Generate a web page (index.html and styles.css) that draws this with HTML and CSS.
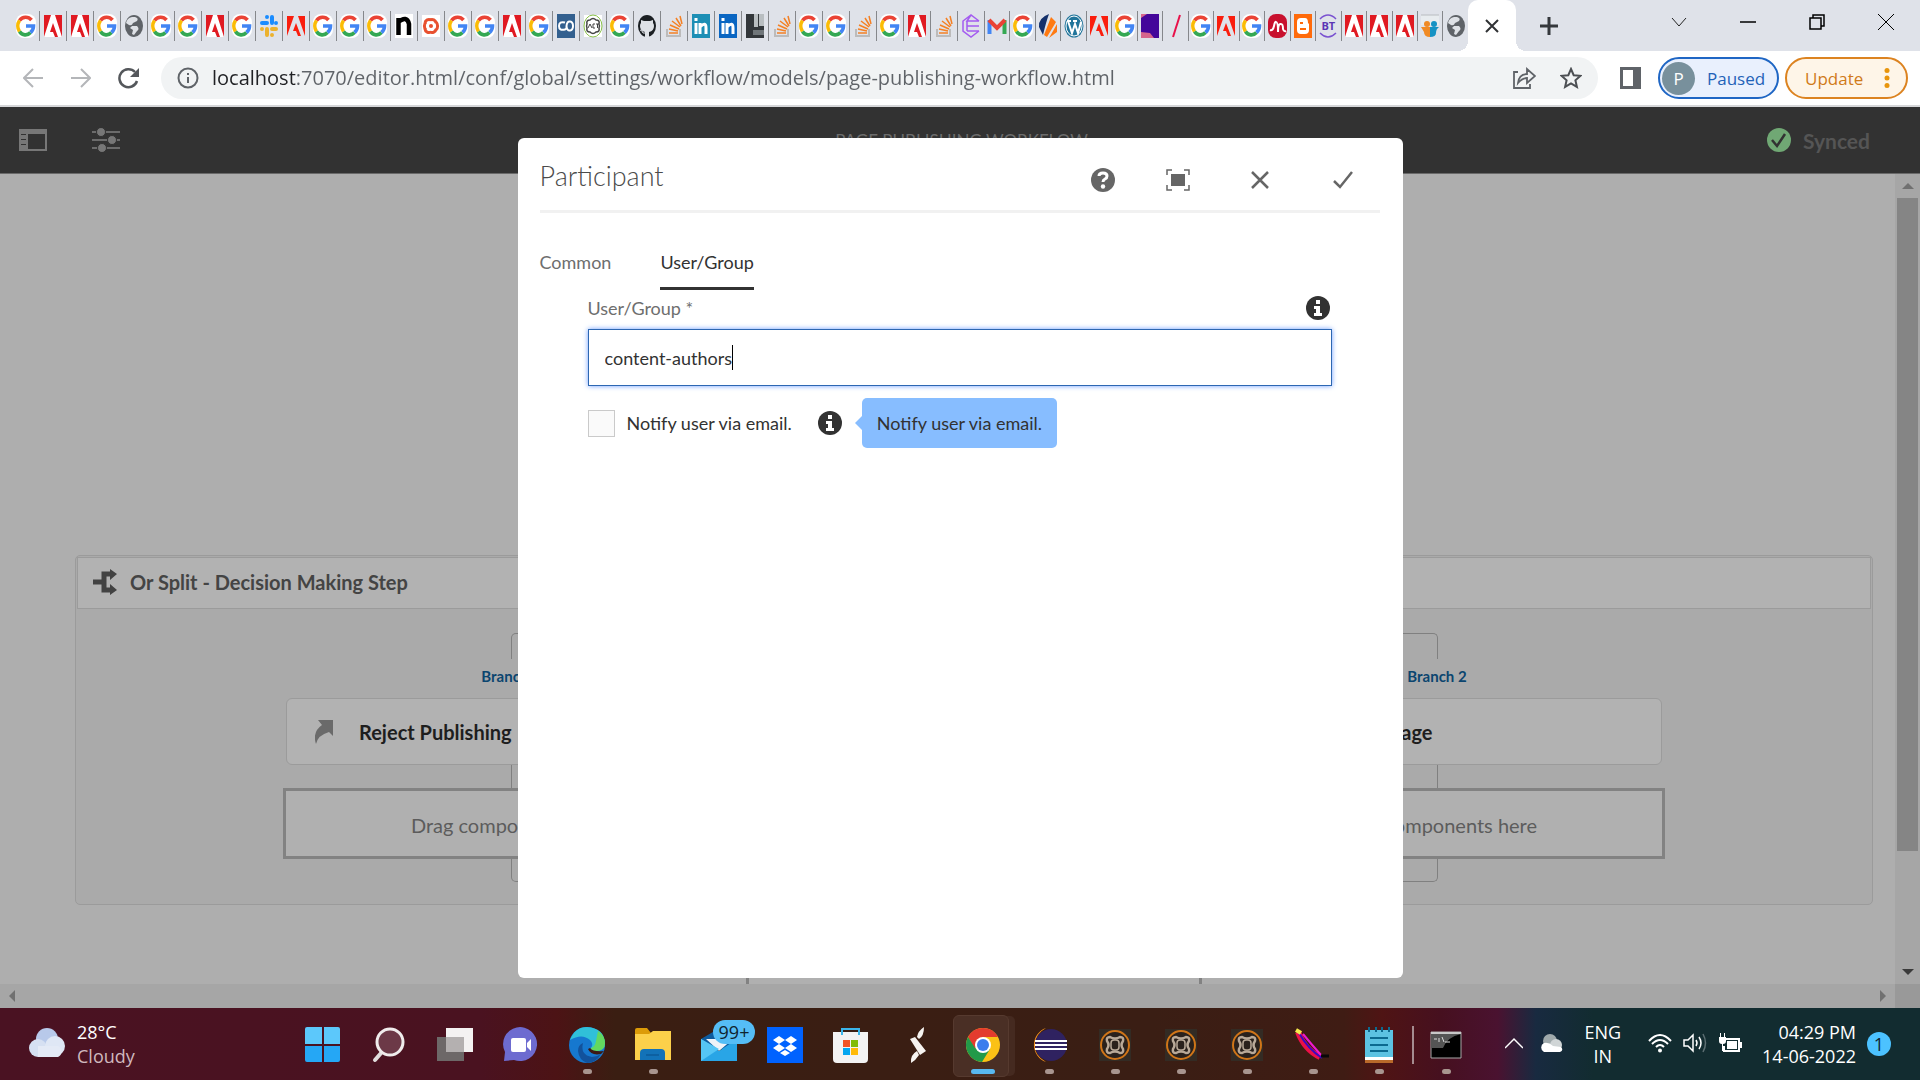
FILE: index.html
```html
<!DOCTYPE html>
<html lang="en">
<head>
	<meta charset="UTF-8">
	<title>Page Publishing Workflow</title>
	<link rel="stylesheet" href="styles.css">
</head>
<body>
	<!-- icon sprites -->
	<svg class="sprites" aria-hidden="true">
		<symbol id="f-g" viewBox="0 0 20 24" preserveAspectRatio="none">
			<rect width="20" height="24" rx="8" fill="#fff"/>
			<path d="M15.500 6A8 9 0 0 0 3.500 6.500" fill="none" stroke="#ea4335" stroke-width="3.600"/>
			<path d="M3.500 6.500A8 9 0 0 0 3.500 17.500" fill="none" stroke="#fbbc05" stroke-width="3.600"/>
			<path d="M3.500 17.500A7.500 9 0 0 0 14.500 18.500" fill="none" stroke="#34a853" stroke-width="3.600"/>
			<path d="M10 12H17.500Q17.500 16 14.500 18.500" fill="none" stroke="#4285f4" stroke-width="3.600"/>
		</symbol>
		<symbol id="f-a" viewBox="0 0 20 24" preserveAspectRatio="none">
			<path fill="#fff" d="M1 1h18v22H1z"/>
			<path fill="#e01a22" d="M1 1h7L1 23zM12 1h7v22zM10 9l5 14h-3l-2-5H7z"/>
		</symbol>
		<symbol id="f-ar" viewBox="0 0 20 24" preserveAspectRatio="none">
			<path fill="#fa1e0e" d="M1 2h7L1 22zM12 2h7v20zM10 9l5 13h-3l-2-5H7z"/>
		</symbol>
		<symbol id="f-globe" viewBox="0 0 20 24" preserveAspectRatio="none">
			<ellipse cx="10" cy="12" rx="9" ry="11" fill="#5f6368"/>
			<path d="M11 3q4 1 2 4l-4 2q-1 3-4 2l-3-2q1-5 6-6M8 12h5q3 3 0 5l-3 4-2-1 1-4-3-2z" fill="#dee1e6"/>
		</symbol>
		<symbol id="f-slack" viewBox="0 0 20 24" preserveAspectRatio="none">
			<g fill="none" stroke-width="4" stroke-linecap="round">
				<path stroke="#1a8cff" d="M8 3v0M3 9h5M13 3v6M17 9v0"/>
				<path stroke="#ecb22e" d="M3 15v0M8 15v6M13 15h4M13 21v0"/>
			</g>
		</symbol>
		<symbol id="f-n" viewBox="0 0 20 24" preserveAspectRatio="none">
			<path fill="#fff" d="M1 0h18v24H1z"/>
			<path d="M4.500 21V4M4 8q9-7 11 2v11" fill="none" stroke="#000" stroke-width="4.500"/>
		</symbol>
		<symbol id="f-swirl" viewBox="0 0 20 24" preserveAspectRatio="none">
			<path fill="#fff" d="M1 1h18v22H1z"/>
			<path d="M9 6a4 4 0 0 1 6 3M15 8a4 5 0 0 1 0 8M15 15a4 4 0 0 1-6 3M10 18a4 4 0 0 1-6-3M5 16a4 5 0 0 1 0-8M4 9a4 4 0 0 1 6-3" fill="none" stroke="#e8502f" stroke-width="3"/>
			<circle cx="10" cy="12" r="2" fill="#e8502f"/>
		</symbol>
		<symbol id="f-co" viewBox="0 0 20 24" preserveAspectRatio="none">
			<path fill="#33608f" d="M1 0h18v24H1z"/>
			<path d="M9 8.500Q3 7 3 12t6 3.500Q11 15 10.500 12 11 7 14 7.500T17 12t-3 4.500-3.500-4.500" fill="none" stroke="#fff" stroke-width="2"/>
		</symbol>
		<symbol id="f-act" viewBox="0 0 20 24" preserveAspectRatio="none">
			<path fill="#fff" d="M1 1h18v22H1z"/>
			<ellipse cx="10" cy="12" rx="9" ry="11" fill="none" stroke="#8ac249"/>
			<path d="M7 6q3-3 6 0 4 0 3 4 1 2 0 4 1 4-3 4-3 3-6 0-4 0-3-4-1-2 0-4-1-4 3-4z" fill="none" stroke="#444" stroke-width="1.500"/>
			<path d="M5 14l2-4 2 4M12 10h-2v4h2M13 10h3M14.500 10v4" fill="none" stroke="#444"/>
		</symbol>
		<symbol id="f-github" viewBox="0 0 20 24" preserveAspectRatio="none">
			<ellipse cx="10" cy="12" rx="9" ry="11" fill="#1b1f23"/>
			<path d="M8 23v-5q-5-1-5-6 0-2 1-3V6l3 1h6l3-1v3q1 1 1 3 0 5-5 6v5z" fill="#dee1e6"/>
			<path d="M3 16q2 0 3 3h3" fill="none" stroke="#dee1e6"/>
		</symbol>
		<symbol id="f-so" viewBox="0 0 20 24" preserveAspectRatio="none">
			<path d="M3 15v7h13v-7" fill="none" stroke="#bcbbbb" stroke-width="2"/>
			<path d="M5 19h9M5 15l9 2M6 11l9 4M8 7l8 6M12 4l5 8M16 2l2 8" stroke="#f48024" stroke-width="1.500"/>
		</symbol>
		<symbol id="f-in" viewBox="0 0 20 24" preserveAspectRatio="none">
			<path fill="currentColor" d="M1 0h18v24H1z"/>
			<path d="M5 9v11M5 4v3M9 9v11M9 13q6-6 6 1v6" fill="none" stroke="#fff" stroke-width="3"/>
		</symbol>
		<symbol id="f-photo" viewBox="0 0 20 24" preserveAspectRatio="none">
			<path fill="#33373b" d="M1 0h18v24H1z"/><path fill="#b9bec1" d="M9 0h4v13H9zM14 0h5v12h-5z"/><path fill="#70767a" d="M8 16h11v5H8z"/>
		</symbol>
		<symbol id="f-hex" viewBox="0 0 20 24" preserveAspectRatio="none">
			<path d="M18 7l-8-6-8 6v10l8 6 8-6M6 7v10M6 12h12M10 1L6 7l12 0M6 17h12" fill="none" stroke="#a45cf0" stroke-width="1.500"/>
		</symbol>
		<symbol id="f-gmail" viewBox="0 0 20 24" preserveAspectRatio="none">
			<path d="M2.500 20V6" stroke="#4285f4" stroke-width="4"/><path d="M17.500 20V6" stroke="#34a853" stroke-width="4"/>
			<path d="M2 6l8 8 8-8" fill="none" stroke="#ea4335" stroke-width="4"/>
		</symbol>
		<symbol id="f-split" viewBox="0 0 20 24" preserveAspectRatio="none">
			<path fill="#14306b" d="M11 0Q0 4 1 13l4 8Q8 8 11 0z"/><path fill="#ff7a12" d="M13 3l5 5-9 15-3-2zM19 10v8l-8 6z"/>
		</symbol>
		<symbol id="f-wp" viewBox="0 0 20 24" preserveAspectRatio="none">
			<ellipse cx="10" cy="12" rx="9.500" ry="11.500" fill="#21759b"/>
			<ellipse cx="10" cy="12" rx="8" ry="10" fill="none" stroke="#fff"/>
			<path d="M4 7l4 12 3-9 3 9 3-11M3 7h4M9 7h4" fill="none" stroke="#fff" stroke-width="2"/>
		</symbol>
		<symbol id="f-purple" viewBox="0 0 20 24" preserveAspectRatio="none">
			<path fill="#43069a" d="M1 0h18v24H1z"/><path fill="#d6658c" d="M1 18l9 1 4 5H1zM1 0h6L1 4z"/>
		</symbol>
		<symbol id="f-slash" viewBox="0 0 20 24"><path d="M14 1L7 23" stroke="#e8114a" stroke-width="2"/></symbol>
		<symbol id="f-red" viewBox="0 0 20 24" preserveAspectRatio="none">
			<rect x="1" width="19" height="24" rx="8" fill="#c8102e"/>
			<path d="M3 16q3 1 4-4t2-4q2 0 2 10 0-9 3-8 2 0 2 5 1 3 3 2" fill="none" stroke="#fff" stroke-width="2"/>
		</symbol>
		<symbol id="f-blog" viewBox="0 0 20 24" preserveAspectRatio="none">
			<path fill="#ff6a0a" d="M1 0h18v24H1z"/><path fill="#fff" d="M8 4h4q3 0 3 5l1 1v6q0 4-4 4H8q-4 0-4-4V8q0-4 4-4z"/>
			<path d="M7 9h3M7 15h6" stroke="#ff6a0a" stroke-width="2"/>
		</symbol>
		<symbol id="f-arc" viewBox="0 0 20 24" preserveAspectRatio="none">
			<path d="M2 5q8-8 16 0M2 19q8 8 16 0" fill="none" stroke="#7a52d0" stroke-width="1.500"/>
		</symbol>
		<symbol id="f-slide" viewBox="0 0 20 24" preserveAspectRatio="none">
			<path fill="#e8ecef" d="M1 1h18v10H1z"/><path stroke="#b8bcc0" d="M1 1h18"/>
			<circle cx="7" cy="10" r="3" fill="#f08a24"/><circle cx="14" cy="10" r="3" fill="#1592c4"/>
			<path fill="#f08a24" d="M1 13h9v10q-6 0-6-5z"/><path fill="#1592c4" d="M10 13h9q-3 2-3 6 0 4-6 4z"/>
		</symbol>
		<symbol id="i-info" viewBox="0 0 24 24">
			<circle cx="12" cy="12" r="12" fill="#323232"/>
			<path fill="#fff" d="M10 4h4v4h-4zM8 10h6v7h2v3H8v-3h2v-4H8z"/>
		</symbol>
		<symbol id="t-aem" viewBox="0 0 32 32">
			<path fill="#332b24" d="M0 0h32v32H0z"/>
			<circle cx="16" cy="16" r="14" fill="#2a211c" stroke="#d07518" stroke-width="2"/>
			<path d="M11 8q5 3 10 0 4 0 3 4-3 4 0 8 1 4-3 4-5-3-10 0-4 0-3-4 3-4 0-8-1-4 3-4z" fill="none" stroke="#b9a998" stroke-width="2.500"/>
			<rect x="12" y="11" width="8" height="10" rx="3" fill="none" stroke="#b9a998" stroke-width="1.500"/>
		</symbol>
	</svg>

	<header class="tabstrip">
		<div class="tabs">
			<button class="tab"><svg><use href="#f-g"/></svg></button>
			<button class="tab"><svg><use href="#f-a"/></svg></button>
			<button class="tab"><svg><use href="#f-a"/></svg></button>
			<button class="tab"><svg><use href="#f-g"/></svg></button>
			<button class="tab"><svg><use href="#f-globe"/></svg></button>
			<button class="tab"><svg><use href="#f-g"/></svg></button>
			<button class="tab"><svg><use href="#f-g"/></svg></button>
			<button class="tab"><svg><use href="#f-a"/></svg></button>
			<button class="tab"><svg><use href="#f-g"/></svg></button>
			<button class="tab"><svg><use href="#f-slack"/></svg></button>
			<button class="tab"><svg><use href="#f-ar"/></svg></button>
			<button class="tab"><svg><use href="#f-g"/></svg></button>
			<button class="tab"><svg><use href="#f-g"/></svg></button>
			<button class="tab"><svg><use href="#f-g"/></svg></button>
			<button class="tab"><svg><use href="#f-n"/></svg></button>
			<button class="tab"><svg><use href="#f-swirl"/></svg></button>
			<button class="tab"><svg><use href="#f-g"/></svg></button>
			<button class="tab"><svg><use href="#f-g"/></svg></button>
			<button class="tab"><svg><use href="#f-a"/></svg></button>
			<button class="tab"><svg><use href="#f-g"/></svg></button>
			<button class="tab"><svg><use href="#f-co"/></svg></button>
			<button class="tab"><svg><use href="#f-act"/></svg></button>
			<button class="tab"><svg><use href="#f-g"/></svg></button>
			<button class="tab"><svg><use href="#f-github"/></svg></button>
			<button class="tab"><svg><use href="#f-so"/></svg></button>
			<button class="tab tab-teal"><svg><use href="#f-in"/></svg></button>
			<button class="tab tab-blue"><svg><use href="#f-in"/></svg></button>
			<button class="tab"><svg><use href="#f-photo"/></svg></button>
			<button class="tab"><svg><use href="#f-so"/></svg></button>
			<button class="tab"><svg><use href="#f-g"/></svg></button>
			<button class="tab"><svg><use href="#f-g"/></svg></button>
			<button class="tab"><svg><use href="#f-so"/></svg></button>
			<button class="tab"><svg><use href="#f-g"/></svg></button>
			<button class="tab"><svg><use href="#f-a"/></svg></button>
			<button class="tab"><svg><use href="#f-so"/></svg></button>
			<button class="tab"><svg><use href="#f-hex"/></svg></button>
		</div>
		<div class="tabs tabs-tight">
			<button class="tab"><svg><use href="#f-gmail"/></svg></button>
			<button class="tab"><svg><use href="#f-g"/></svg></button>
			<button class="tab"><svg><use href="#f-split"/></svg></button>
			<button class="tab"><svg><use href="#f-wp"/></svg></button>
			<button class="tab"><svg><use href="#f-ar"/></svg></button>
			<button class="tab"><svg><use href="#f-g"/></svg></button>
			<button class="tab"><svg><use href="#f-purple"/></svg></button>
			<button class="tab"><svg><use href="#f-slash"/></svg></button>
			<button class="tab"><svg><use href="#f-g"/></svg></button>
			<button class="tab"><svg><use href="#f-ar"/></svg></button>
			<button class="tab"><svg><use href="#f-g"/></svg></button>
			<button class="tab"><svg><use href="#f-red"/></svg></button>
			<button class="tab"><svg><use href="#f-blog"/></svg></button>
			<button class="tab tab-bt"><svg><use href="#f-arc"/></svg><span>BT</span></button>
			<button class="tab"><svg><use href="#f-a"/></svg></button>
			<button class="tab"><svg><use href="#f-a"/></svg></button>
			<button class="tab"><svg><use href="#f-a"/></svg></button>
			<button class="tab"><svg><use href="#f-slide"/></svg></button>
			<button class="tab"><svg><use href="#f-globe"/></svg></button>
		</div>
		<button class="tab-active" aria-label="Close tab"><svg width="14" height="14" viewBox="0 0 14 14"><path d="M1 1l12 12M13 1L1 13" stroke="#303235" stroke-width="2"/></svg></button>
		<button class="tab-new" aria-label="New tab"><svg width="18" height="18" viewBox="0 0 18 18"><path d="M9 0v18M0 9h18" stroke="#35383c" stroke-width="3"/></svg></button>
		<div class="window-controls">
			<button aria-label="Search tabs"><svg width="16" height="16" viewBox="0 0 16 16"><path d="M1 4l7 8 7-8" fill="none" stroke="#222"/></svg></button>
			<button aria-label="Minimize"><svg width="16" height="16" viewBox="0 0 16 16"><path d="M0 8h16" stroke="#000" stroke-width="1.500"/></svg></button>
			<button aria-label="Restore"><svg width="16" height="16" viewBox="0 0 16 16"><path d="M1 4h11v11H1zM4 4V1h11v11h-3" fill="none" stroke="#000" stroke-width="1.500"/></svg></button>
			<button aria-label="Close"><svg width="16" height="16" viewBox="0 0 16 16"><path d="M0 0l16 16M16 0L0 16" stroke="#000"/></svg></button>
		</div>
	</header>

	<nav class="toolbar">
		<button class="nav-btn" aria-label="Back"><svg width="20" height="20" viewBox="0 0 20 20"><path d="M20 10H2M10 1l-9 9 9 9" fill="none" stroke="#b4b6b9" stroke-width="2"/></svg></button>
		<button class="nav-btn" aria-label="Forward"><svg width="20" height="20" viewBox="0 0 20 20"><path d="M0 10h18M10 1l9 9-9 9" fill="none" stroke="#b4b6b9" stroke-width="2"/></svg></button>
		<button class="nav-btn" aria-label="Reload"><svg width="22" height="22" viewBox="0 0 22 22"><path d="M19 14A9 9 0 1 1 17 5" fill="none" stroke="#54575b" stroke-width="2.500"/><path fill="#54575b" d="M21 1v9h-9z"/></svg></button>
		<div class="omnibox">
			<svg width="22" height="22" viewBox="0 0 22 22"><circle cx="11" cy="11" r="9.500" fill="none" stroke="#5f6368" stroke-width="2"/><path d="M11 10v6M11 6v2" stroke="#5f6368" stroke-width="2"/></svg>
			<input class="url" type="text" aria-label="Address" value="localhost:7070/editor.html/conf/global/settings/workflow/models/page-publishing-workflow.html">
			<button aria-label="Share"><svg width="24" height="24" viewBox="0 0 24 24"><path d="M6 6H2v16h16v-4M6 17q1-9 9-9V3l8 7-8 7v-5q-5 0-9 5z" fill="none" stroke="#5f6368" stroke-width="1.800"/></svg></button>
			<button aria-label="Bookmark"><svg width="22" height="22" viewBox="0 0 22 22"><path d="M11 2l2.700 6.200 6.800.6-5.100 4.500 1.500 6.600L11 16.400l-5.900 3.500 1.500-6.600L1.500 8.800l6.800-.6z" fill="none" stroke="#4c4f53" stroke-width="2"/></svg></button>
		</div>
		<button class="side-btn" aria-label="Side panel"><svg width="21" height="22" viewBox="0 0 21 22"><path fill="#5f6368" d="M0 0h21v22H0z"/><path fill="#fff" d="M3 3h10v16H3z"/></svg></button>
		<button class="pill pill-blue"><span class="avatar">P</span>Paused</button>
		<button class="pill pill-amber">Update<svg width="6" height="20" viewBox="0 0 6 20"><g fill="#e8950c"><circle cx="3" cy="2.500" r="2.500"/><circle cx="3" cy="10" r="2.500"/><circle cx="3" cy="17.500" r="2.500"/></g></svg></button>
	</nav>

	<main class="app">
		<div class="app-header">
			<button aria-label="Toggle side panel"><svg width="28" height="22" viewBox="0 0 28 22"><path fill="#777" fill-rule="evenodd" d="M0 0h28v22H0zM9 5v15h17V5zM2 5v1h5V5zM2 10v1h5v-1zM2 15v1h5v-1z"/></svg></button>
			<button aria-label="Properties"><svg width="28" height="24" viewBox="0 0 28 24"><path d="M0 4h28M0 12h28M0 20h28" stroke="#6c6c6c" stroke-width="2"/><g fill="#777" stroke="#323232"><circle cx="9" cy="4" r="4.500"/><circle cx="20" cy="12" r="4.500"/><circle cx="10" cy="20" r="4.500"/></g></svg></button>
			<h1>PAGE PUBLISHING WORKFLOW</h1>
			<div class="synced"><svg width="24" height="24" viewBox="0 0 24 24"><circle cx="12" cy="12" r="12" fill="#70a874"/><path d="M5 12l5 6 8-12" fill="none" stroke="#323232" stroke-width="2.500"/></svg>Synced</div>
		</div>

		<div class="workspace">
			<div class="canvas">
				<section class="split">
					<h2 class="split-title"><svg width="24" height="26" viewBox="0 0 24 26"><path d="M0 13h11M18 5h-7v16h7" fill="none" stroke="#424242" stroke-width="5"/><path fill="#424242" d="M17 0l7 5-7 6zM17 15l7 6-7 5z"/></svg>Or Split - Decision Making Step</h2>
					<div class="fork"></div>
					<div class="branches">
						<div class="branch">
							<a href="#">Branch 1</a>
							<div class="step"><svg width="18" height="24" viewBox="0 0 18 24"><path fill="#6a6a6a" d="M3 0h15v16l-4-4Q3 15 1 24-3 12 7 5z"/></svg>Reject Publishing</div>
							<div class="link"></div>
							<div class="dropzone">Drag components here</div>
						</div>
						<div class="branch">
							<a href="#">Branch 2</a>
							<div class="step"><svg width="18" height="24" viewBox="0 0 18 24"><path fill="#6a6a6a" d="M3 0h15v16l-4-4Q3 15 1 24-3 12 7 5z"/></svg>Publish the Page</div>
							<div class="link"></div>
							<div class="dropzone">Drag components here</div>
						</div>
					</div>
					<div class="join"></div>
				</section>
				<div class="dropzone dropzone-main">Drag components here</div>
			</div>
			<div class="scroll-y"><i class="arrow-up"></i><i class="thumb"></i><i class="arrow-down"></i></div>
			<div class="scroll-x"><i class="arrow-left"></i><i class="arrow-right"></i></div>
			<div class="scroll-corner"></div>
		</div>

		<div class="overlay">
			<form class="dialog">
				<div class="dialog-header">
					<h2>Participant</h2>
					<button type="button" aria-label="Help"><svg width="24" height="24" viewBox="0 0 24 24"><circle cx="12" cy="12" r="12" fill="#666"/><path d="M8 8q0-3 4-3t4 3q0 2-2 3t-2 3" fill="none" stroke="#fff" stroke-width="3"/><circle cx="12" cy="18.500" r="2.200" fill="#fff"/></svg></button>
					<button type="button" aria-label="Full screen"><svg width="24" height="22" viewBox="0 0 24 22"><path fill="#666" d="M5 5h14v12H5z"/><path d="M1 6V1h5M18 1h5v5M23 16v5h-5M6 21H1v-5" fill="none" stroke="#666" stroke-width="1.500"/></svg></button>
					<button type="button" aria-label="Cancel"><svg width="18" height="18" viewBox="0 0 18 18"><path d="M1 1l16 16M17 1L1 17" stroke="#666" stroke-width="2.500"/></svg></button>
					<button type="button" aria-label="Done"><svg width="20" height="18" viewBox="0 0 20 18"><path d="M1 10l6 6L19 1" fill="none" stroke="#666" stroke-width="2.500"/></svg></button>
				</div>
				<div class="dialog-tabs">
					<button type="button">Common</button>
					<button type="button" class="selected">User/Group</button>
				</div>
				<div class="fields">
					<div class="field-head">
						<label for="group">User/Group *</label>
						<svg width="24" height="24"><use href="#i-info"/></svg>
					</div>
					<div class="textbox">
						<input id="group" type="text" value="content-authors">
						<i class="caret"></i>
					</div>
					<div class="check-row">
						<input id="notify" type="checkbox">
						<label for="notify">Notify user via email.</label>
						<svg width="24" height="24"><use href="#i-info"/></svg>
						<div class="tooltip">Notify user via email.</div>
					</div>
				</div>
			</form>
		</div>
	</main>

	<footer class="taskbar">
		<div class="weather">
			<svg width="37" height="30" viewBox="0 0 37 30"><circle cx="18" cy="11" r="11" fill="#b8c9ea"/><circle cx="9" cy="20" r="9" fill="#d6e0f2"/><circle cx="26" cy="18" r="10" fill="#dfe7f5"/><path fill="#e4eaf6" d="M9 18h20a6 6 0 0 1 0 11H9z"/></svg>
			<div>28°C<span>Cloudy</span></div>
		</div>
		<div class="apps">
			<button aria-label="Start"><svg width="36" height="36" viewBox="0 0 36 36"><path fill="#5cc8fb" d="M0 2q0-2 2-2h15v17H0zM19 0h14q2 0 2 2v15H19z"/><path fill="#25a7f5" d="M0 19h17v16H2q-2 0-2-2zM19 19h16v14q0 2-2 2H19z"/></svg></button>
			<button aria-label="Search"><svg width="36" height="36" viewBox="0 0 36 36"><path d="M11 25l-7 8" stroke="#e0dcdc" stroke-width="4" stroke-linecap="round"/><circle cx="19" cy="15" r="13" fill="#6c3947" stroke="#f0ecec" stroke-width="3"/></svg></button>
			<button aria-label="Task view"><svg width="36" height="36" viewBox="0 0 36 36"><path fill="#f4f2f2" d="M9 1h27v24H9z"/><path fill="#6d6868" d="M0 10h27v24H0z"/><path fill="#b4b0b0" d="M9 10h18v15H9z"/></svg></button>
			<button aria-label="Chat"><svg width="36" height="36" viewBox="0 0 36 36"><path fill="#6d6bd0" d="M1 34l1-9A17 17 0 1 1 11 33z"/><rect x="8" y="11" width="15" height="14" rx="2" fill="#fff"/><path fill="#fff" d="M24 16l4-4v12l-4-4z"/></svg></button>
			<button class="run" aria-label="Edge"><svg width="36" height="36" viewBox="0 0 36 36"><circle cx="18" cy="18" r="18" fill="#1678cf"/><path fill="#30c0d8" d="M1 13Q6 0 18 0q17 1 18 16 0 8-9 8-6 0-5-3 3-4-1-8-8-7-20 0z"/><path fill="#63d85f" d="M29 4q7 5 7 12 0 8-9 8-6 0-5-3 4-1 5-7z"/><path fill="#12529c" d="M14 16q-3 12 9 14 5 0 9-3-5 9-14 9-8-3-9-12 0-6 5-8z"/><path fill="#3c1a14" d="M21 21q3 4 14 3l-3 3q-10 2-13-5z"/></svg></button>
			<button class="run" aria-label="File Explorer"><svg width="36" height="36" viewBox="0 0 36 36"><path fill="#dc9b08" d="M0 3q0-2 2-2h10l4 5h10v6H0z"/><path fill="#fcd04a" d="M0 7h14l4-3h18v29H0z"/><path fill="#1272b8" d="M5 33V26q0-4 4-4h17q4 0 4 4v7z"/><path d="M11 28h13" stroke="#084f8a"/></svg></button>
			<button class="mail" aria-label="Mail"><svg width="36" height="36" viewBox="0 0 36 36"><path fill="#0e5b9e" d="M0 12L17 2l19 10v10H0z"/><path fill="#f0f3f8" d="M5 12h27l-14 12z"/><path fill="#29a5e6" d="M0 12l18 12L36 12v22H0z"/><path fill="#55c5f5" d="M0 34l18-12L0 12z"/></svg><span>99+</span></button>
			<button aria-label="Dropbox"><svg width="36" height="36" viewBox="0 0 36 36"><path fill="#0062ff" d="M0 0h36v36H0z"/><path fill="#fff" d="M12 9l6 4-6 4-6-4zM24 9l6 4-6 4-6-4zM12 17l6 4-6 4-6-4zM24 17l6 4-6 4-6-4zM18 23l5 3-5 3-5-3z"/></svg></button>
			<button aria-label="Store"><svg width="36" height="36" viewBox="0 0 36 36"><path fill="#f3f3f3" d="M0 5h35v27q0 4-4 4H4q-4 0-4-4z"/><path d="M9 8V2h17v6" fill="none" stroke="#3bb5ea" stroke-width="2"/><path fill="#f35325" d="M10 13h7v7h-7z"/><path fill="#81bc06" d="M18 13h7v7h-7z"/><path fill="#05a6f0" d="M10 21h7v7h-7z"/><path fill="#ffba08" d="M18 21h7v7h-7z"/></svg></button>
			<button aria-label="Sublime"><svg width="36" height="36" viewBox="0 0 36 36"><path fill="#f6f3f0" d="M25 0q0 9-5 12l-2-2q1-6 7-10zM11 12l5-2 11 14-6 4zM12 36q-1-8 6-12l2 4q-3 5-8 8z"/></svg></button>
			<button class="run current" aria-label="Chrome"><svg width="34" height="34" viewBox="0 0 34 34"><circle cx="17" cy="17" r="17" fill="#fbc116"/><path fill="#e33b2e" d="M2 9A17 17 0 0 1 32 9H17l-8 13z"/><path fill="#229a49" d="M2 9A17 17 0 0 0 16 34l8-13-15-1z"/><circle cx="17" cy="17" r="8" fill="#fff"/><circle cx="17" cy="17" r="6" fill="#3b7ded"/></svg></button>
			<button class="run" aria-label="Eclipse"><svg width="36" height="36" viewBox="0 0 36 36"><path d="M15 1A18 18 0 0 0 15 35Q3 28 4 18 4 7 15 1z" fill="#f3921e"/><circle cx="20" cy="18" r="16" fill="#2f2260"/><path d="M4 14h32M4 18h32M4 22h32" stroke="#fff" stroke-width="2"/></svg></button>
			<button class="run" aria-label="Author"><svg width="32" height="32"><use href="#t-aem"/></svg></button>
			<button class="run" aria-label="Publish"><svg width="32" height="32"><use href="#t-aem"/></svg></button>
			<button class="run" aria-label="Dispatcher"><svg width="32" height="32"><use href="#t-aem"/></svg></button>
			<button class="run" aria-label="JMeter"><svg width="36" height="36" viewBox="0 0 36 36"><path d="M3 5q7 18 22 25" fill="none" stroke="#ec1048" stroke-width="6"/><path d="M4 6q9 16 23 25" fill="none" stroke="#3a0ac0" stroke-width="2"/><path d="M8 7q9 11 18 21" fill="none" stroke="#f018d0" stroke-width="2"/><path d="M1 3l5 3" stroke="#f5e84c" stroke-width="4"/><path d="M26 29h8" stroke="#080808" stroke-width="3"/></svg></button>
			<button class="run" aria-label="Notepad"><svg width="36" height="36" viewBox="0 0 36 36"><path fill="#5cc2e2" d="M4 3h28v28H4z"/><path fill="#fff" d="M4 30h28v3H4z"/><path fill="#b9692a" d="M4 33h28v3H4z"/><path d="M8 0v5M15 0v5M21 0v5M28 0v5M9 11h18M9 18h18M9 24h18" stroke="#0c6a90" stroke-width="2"/></svg></button>
			<button class="run divided" aria-label="Command Prompt"><svg width="32" height="28" viewBox="0 0 32 28"><path fill="#000" stroke="#a8a8a8" d="M1 1h30v26H1z"/><path fill="#c8c8c8" d="M1 1h30v2H1z"/><path fill="#555" d="M1 3h30q-14 3-18 14H1z"/><path d="M4 8h3M9 7v4M12 6l2 5M15 11h5" stroke="#ddd"/></svg></button>
		</div>
		<div class="tray">
			<svg class="more" width="18" height="12" viewBox="0 0 18 12"><path d="M0 11l9-9 9 9" fill="none" stroke="#fff" stroke-width="1.500"/></svg>
			<svg width="24" height="18" viewBox="0 0 24 18"><circle cx="11" cy="7" r="7" fill="#9fa9ab"/><circle cx="17" cy="11" r="6" fill="#d0d5d6"/><path fill="#fff" d="M5 18a5 5 0 0 1 0-9q5-1 9 3l8 1q3 3-1 5z"/></svg>
			<div class="lang">ENG<br>IN</div>
			<svg width="24" height="20" viewBox="0 0 24 20"><path d="M1 8q11-12 22 0M4 11q8-8 16 0M8 14q4-4 8 0" fill="none" stroke="#fff" stroke-width="2"/><circle cx="12" cy="17.500" r="2" fill="#fff"/></svg>
			<svg width="24" height="20" viewBox="0 0 24 20"><path d="M1 7h4l5-5v16l-5-5H1zM13 7q2 3 0 6M16 4q4 6 0 12" fill="none" stroke="#fff" stroke-width="1.500"/><path d="M20 1q5 9 0 18" fill="none" stroke="#5c6e72" stroke-width="1.500"/></svg>
			<svg width="24" height="20" viewBox="0 0 24 20"><path d="M8 6h13v12H6v-5" fill="none" stroke="#fff" stroke-width="2"/><path fill="#fff" d="M9 8h10v8H9zM22 9h2v6h-2zM1 4h7v4q0 3-3 3v7H4v-7q-3 0-3-3zM2 0h1v4H2zM6 0h1v4H6z"/></svg>
			<div class="clock">04:29 PM<br>14-06-2022</div>
			<span class="count">1</span>
		</div>
	</footer>
</body>
</html>
```
FILE: styles.css
```css
*{
	box-sizing: border-box;
}
body,h1,h2{
	margin: 0;
}
body{
	height: 100vh;
	display: flex;
	flex-direction: column;
	overflow: hidden;
	font-family: "Open Sans", "Noto Sans", sans-serif;
}
button{
	border: 0;
	padding: 0;
	background: none;
	font: inherit;
	color: inherit;
}
svg{
	display: block;
	flex: none;
}
.sprites{
	position: absolute;
	width: 0;
	height: 0;
}

/* browser tabs */
.tabstrip{
	height: 51px;
	display: flex;
	background: #dfe2e9;
}
.tabs{
	display: flex;
	align-items: center;
	padding-left: 13px;
}
.tabs-tight{
	flex: 1;
	padding-left: 0;
}
.tab{
	width: 27px;
	height: 30px;
	border-right: 1px solid #85878b;
	display: flex;
	align-items: center;
	justify-content: center;
	position: relative;
}
.tab svg{
	width: 20px;
	height: 24px;
}
.tabs-tight .tab{
	flex: 1;
	width: auto;
}
.tabs-tight .tab:last-child{
	border: 0;
}
.tab-teal{
	color: #1d8fb5;
}
.tab-blue{
	color: #0a66c2;
}
.tab-bt span{
	position: absolute;
	font-size: 11px;
	font-weight: 700;
	color: #5b35b5;
}
.tab-active{
	width: 48px;
	background: #fff;
	border-radius: 10px 10px 0 0;
	display: flex;
	align-items: center;
	justify-content: center;
	position: relative;
}
.tab-active::before,.tab-active::after{
	content: "";
	position: absolute;
	bottom: 0;
	width: 10px;
	height: 10px;
}
.tab-active::before{
	right: 100%;
	background: radial-gradient(circle at 0 0, transparent 10px, #fff 10px);
}
.tab-active::after{
	left: 100%;
	background: radial-gradient(circle at 100% 0, transparent 10px, #fff 10px);
}
.tab-new{
	width: 66px;
	display: flex;
	align-items: center;
	justify-content: center;
}
.window-controls{
	display: flex;
	height: 43px;
	margin-left: 62px;
}
.window-controls button{
	width: 69px;
	display: flex;
	align-items: center;
	justify-content: center;
}

/* address bar */
.toolbar{
	height: 56px;
	display: flex;
	align-items: center;
	padding: 0 12px 0 9px;
	background: #fff;
	border-bottom: 2px solid #d6d7d9;
}
.nav-btn{
	width: 48px;
	display: flex;
	justify-content: center;
}
.nav-btn:nth-child(3){
	margin-right: 8px;
}
.omnibox{
	flex: 1;
	height: 42px;
	display: flex;
	align-items: center;
	gap: 24px;
	padding: 0 16px;
	border-radius: 21px;
	background: #f1f3f4;
}
.url{
	flex: 1;
	margin-left: -11px;
	border: 0;
	padding: 0;
	outline: none;
	font: 20px/30px "Open Sans", sans-serif;
	color: transparent;
	background: linear-gradient(to right, #202124 85px, #5f6368 85px);
	-webkit-background-clip: text;
	background-clip: text;
}
.side-btn{
	margin: 0 17px 0 22px;
}
.pill{
	height: 42px;
	display: flex;
	align-items: center;
	border-radius: 21px;
	font-size: 17px;
}
.pill-blue{
	width: 121px;
	gap: 12px;
	padding-left: 2px;
	margin-right: 6px;
	border: 2px solid #1f66c4;
	background: #e9f0fd;
	color: #1f62b8;
}
.pill-amber{
	width: 123px;
	justify-content: space-between;
	padding: 0 16px 0 18px;
	border: 2px solid #dc8320;
	background: #fef5e8;
	color: #d07a18;
}
.avatar{
	width: 33px;
	height: 33px;
	line-height: 33px;
	border-radius: 50%;
	background: #78909c;
	color: #fff;
}

/* workflow editor */
.app{
	flex: 1;
	min-height: 0;
	display: flex;
	flex-direction: column;
	position: relative;
	font-family: Lato, sans-serif;
}
.app-header{
	height: 67px;
	display: flex;
	align-items: center;
	gap: 45px;
	padding: 0 50px 0 19px;
	background: #323232;
	border-bottom: 1px solid #6a6a6a;
}
.app-header h1{
	flex: 1;
	padding-left: 36px;
	text-align: center;
	font-size: 17px;
	font-weight: 400;
	color: #6c6c6c;
}
.synced{
	display: flex;
	align-items: center;
	gap: 12px;
	font-size: 21px;
	font-weight: 700;
	color: #555;
}
.workspace{
	flex: 1;
	min-height: 0;
	display: grid;
	grid-template-columns: 1fr 25px;
	grid-template-rows: 1fr 24px;
	background: #aeaeae;
}
.canvas{
	min-height: 0;
	overflow: hidden;
	padding: 381px 22px 0 75px;
}
.split{
	height: 350px;
	padding: 1px;
	border: 1px solid #9b9b9b;
	border-radius: 5px;
	background: #aaa;
}
.split-title{
	height: 52px;
	display: flex;
	align-items: center;
	gap: 13px;
	padding: 0 0 3px 15px;
	border: 1px solid #9b9b9b;
	background: #b2b2b2;
	font-size: 20px;
	color: #444;
}
.fork,.join{
	width: 927px;
	margin: 0 auto;
	border: 1px solid #808080;
}
.fork{
	height: 26px;
	margin-top: 24px;
	border-bottom: 0;
	border-radius: 5px 5px 0 0;
}
.join{
	height: 23px;
	border-top: 0;
	border-radius: 0 0 5px 5px;
}
.branches{
	display: flex;
	justify-content: center;
	gap: 470px;
}
.branch{
	width: 456px;
	display: flex;
	flex-direction: column;
	align-items: center;
}
.branch a{
	height: 39px;
	padding-top: 5px;
	line-height: 24px;
	font-size: 15px;
	font-weight: 700;
	color: #0b456f;
	text-decoration: none;
}
.step{
	width: 450px;
	height: 67px;
	display: flex;
	align-items: center;
	gap: 26px;
	padding-left: 28px;
	border: 1px solid #9b9b9b;
	border-radius: 6px;
	background: #b2b2b2;
	font-size: 20px;
	font-weight: 700;
	color: #1e1e1e;
}
.link{
	width: 1px;
	height: 23px;
	background: #808080;
}
.dropzone{
	width: 456px;
	height: 71px;
	border: 3px solid #828282;
	background: #b0b0b0;
	line-height: 68px;
	text-align: center;
	font-size: 20px;
	color: #5c5c5c;
}
.dropzone-main{
	margin: 24px auto 0;
}
.scroll-y,.scroll-x{
	display: flex;
	align-items: center;
	background: #a6a6a6;
}
.scroll-y{
	flex-direction: column;
	padding: 9px 0;
}
.scroll-x{
	justify-content: space-between;
	padding: 0 9px;
}
.scroll-corner{
	background: #999;
}
.thumb{
	flex: 1;
	width: 21px;
	margin: 9px 0 118px;
	background: #858585;
}
.arrow-up,.arrow-down{
	border: 6px solid transparent;
	border-top: 0;
	border-bottom-color: #707070;
}
.arrow-down{
	border-top: 6px solid #3a3a3a;
	border-bottom: 0;
}
.arrow-left,.arrow-right{
	border: 6px solid transparent;
	border-left: 0;
	border-right-color: #707070;
}
.arrow-right{
	border-left: 6px solid #707070;
	border-right: 0;
}

/* participant dialog */
.overlay{
	position: absolute;
	top: 0;
	right: 0;
	bottom: 0;
	left: 0;
	display: flex;
	justify-content: center;
	padding: 31px 0 30px;
}
.dialog{
	width: 885px;
	padding: 0 23px 0 22px;
	border-radius: 6px;
	background: #fff;
	font-size: 18px;
	color: #323232;
}
.dialog-header{
	height: 75px;
	display: flex;
	align-items: center;
	padding: 12px 27px 0 0;
	border-bottom: 3px solid #f1f1f1;
}
.dialog-header h2{
	flex: 1;
	margin-top: -10px;
	font-size: 27px;
	font-weight: 300;
	color: #4b4b4b;
}
.dialog-header button{
	margin-left: 51px;
}
.dialog-header button + button + button{
	margin-left: 61px;
}
.dialog-header button:last-child{
	margin-left: 64px;
}
.dialog-tabs{
	display: flex;
	gap: 49px;
	padding-top: 26px;
}
.dialog-tabs button{
	height: 51px;
	padding-bottom: 2px;
	border-bottom: 3px solid transparent;
	color: #6e6e6e;
}
.dialog-tabs .selected{
	border-color: #323232;
	color: #323232;
}
.fields{
	padding: 6px 48px 0;
}
.field-head{
	height: 33px;
	display: flex;
	justify-content: space-between;
	padding-right: 2px;
	line-height: 24px;
	color: #6e6e6e;
}
.textbox{
	position: relative;
}
.textbox input{
	display: block;
	width: 100%;
	height: 57px;
	padding: 0 16px;
	border: 1px solid #2d67b2;
	outline: none;
	box-shadow: 0 0 5px #6c9dff;
	font: inherit;
	color: #323232;
}
.caret{
	position: absolute;
	top: 16px;
	left: 144px;
	width: 1px;
	height: 25px;
	background: #000;
}
.check-row{
	display: flex;
	align-items: center;
	margin-top: 12px;
}
.check-row input{
	appearance: none;
	width: 27px;
	height: 27px;
	margin: 0 12px 0 0;
	border: 1px solid #cacaca;
	background: #fafafa;
}
.check-row svg{
	margin: 0 20px 0 26px;
}
.tooltip{
	position: relative;
	height: 50px;
	padding: 0 15px;
	border-radius: 5px;
	background: #87bdff;
	line-height: 50px;
}
.tooltip::before{
	content: "";
	position: absolute;
	top: 18px;
	right: 100%;
	border: 7px solid transparent;
	border-left: 0;
	border-right-color: #87bdff;
}

/* windows taskbar */
.taskbar{
	height: 72px;
	display: flex;
	align-items: center;
	padding: 0 29px;
	background: linear-gradient(to right, #4a1222 0, #4a1220 25%, #4c1315 29%, #3a1e12 32%, #3a1e14 60%, #3f1c14 70%, #4f1414 72%, #46101f 75%, #4a1230 78%, #182a40 80%, #122c30 83%, #122c30 100%);
	font-size: 18px;
	line-height: 24px;
	color: #fff;
}
.weather{
	width: 261px;
	display: flex;
	align-items: center;
	gap: 11px;
	flex: none;
}
.weather svg{
	margin-bottom: 3px;
}
.weather span{
	display: block;
	color: #d0b8be;
}
.apps{
	display: flex;
}
.apps button{
	width: 66px;
	height: 72px;
	display: flex;
	align-items: center;
	justify-content: center;
	position: relative;
	padding-top: 2px;
}
.run::after{
	content: "";
	position: absolute;
	bottom: 6px;
	width: 9px;
	height: 5px;
	border-radius: 3px;
	background: #a8958f;
}
.current{
	isolation: isolate;
}
.current::before{
	content: "";
	position: absolute;
	z-index: -1;
	top: 7px;
	left: 3px;
	width: 54px;
	height: 60px;
	border: 1px solid #563a2f;
	border-radius: 6px;
	background: #4a2f25;
	box-shadow: 7px 0 0 -1px #452a20;
}
.apps .current::after{
	width: 24px;
	background: #58b8f0;
}
.mail span{
	position: absolute;
	top: 12px;
	left: 27px;
	width: 42px;
	border-radius: 12px;
	background: #55bdf6;
	color: #10242e;
	text-align: center;
}
.divided{
	border-left: 2px solid #a58c90;
	border-image: linear-gradient(transparent 26%, #a58c90 26%, #a58c90 77%, transparent 77%) 1;
}
.tray{
	flex: 1;
	display: flex;
	align-items: center;
	justify-content: flex-end;
	gap: 11px;
}
.tray svg{
	margin-bottom: 3px;
}
.tray .more{
	margin-right: 5px;
}
.lang{
	margin: 0 16px 0 10px;
	text-align: center;
}
.clock{
	margin-left: 9px;
	text-align: right;
}
.count{
	width: 24px;
	border-radius: 50%;
	background: #4cc2ff;
	color: #10242e;
	text-align: center;
}
```
